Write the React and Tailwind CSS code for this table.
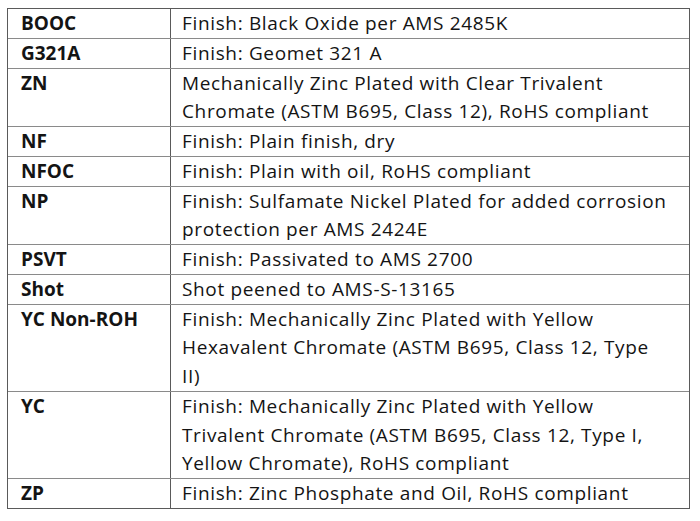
import React from "react";

const rows = [
  ["BOOC", ["Finish: Black Oxide per AMS 2485K"]],
  ["G321A", ["Finish: Geomet 321 A"]],
  ["ZN", ["Mechanically Zinc Plated with Clear Trivalent", "Chromate (ASTM B695, Class 12), RoHS compliant"]],
  ["NF", ["Finish: Plain finish, dry"]],
  ["NFOC", ["Finish: Plain with oil, RoHS compliant"]],
  ["NP", ["Finish: Sulfamate Nickel Plated for added corrosion", "protection per AMS 2424E"]],
  ["PSVT", ["Finish: Passivated to AMS 2700"]],
  ["Shot", ["Shot peened to AMS-S-13165"]],
  ["YC Non-ROH", ["Finish: Mechanically Zinc Plated with Yellow", "Hexavalent Chromate (ASTM B695, Class 12, Type", "II)"]],
  ["YC", ["Finish: Mechanically Zinc Plated with Yellow", "Trivalent Chromate (ASTM B695, Class 12, Type I,", "Yellow Chromate), RoHS compliant"]],
  ["ZP", ["Finish: Zinc Phosphate and Oil, RoHS compliant"]],
];

export default function App() {
  return (
    <div className="w-[700px] h-[521px] bg-white pt-[8px] pl-[7px]" style={{ fontFamily: "'Open Sans', sans-serif" }}>
      <div className="w-[683px] border border-[#5a5a5a] text-[#141414] text-[19px] leading-[28.75px]">
        {rows.map(([code, lines], i) => (
          <div key={i} className={`flex ${i > 0 ? "border-t border-[#8a8a8a]" : ""}`}>
            <div className="w-[163px] shrink-0 border-r border-[#5a5a5a] pl-[13px] font-bold whitespace-nowrap">{code}</div>
            <div className="flex-1 pl-[11px] whitespace-nowrap tracking-[0.65px]">
              {lines.map((l, j) => (
                <div key={j}>{l}</div>
              ))}
            </div>
          </div>
        ))}
      </div>
    </div>
  );
}
